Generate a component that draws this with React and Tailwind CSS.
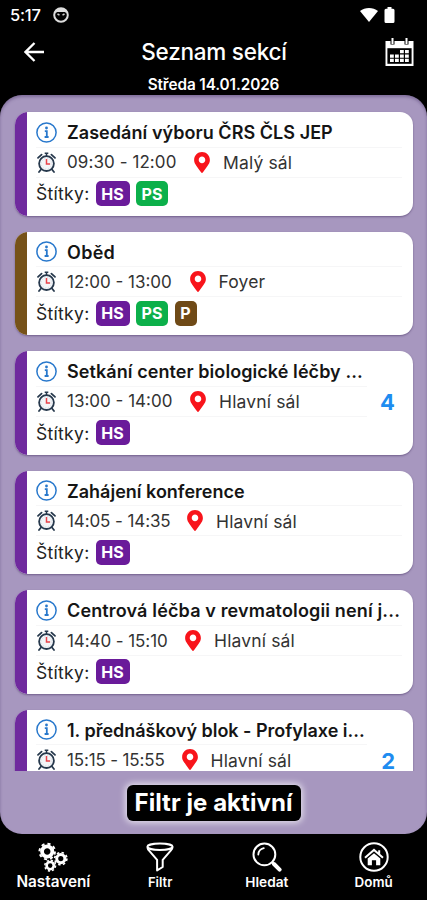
import React from "react";
import { FaMapMarkerAlt } from "react-icons/fa";

const TAGS = {
  HS: "w-[34px] bg-[#6a1b9a]",
  PS: "w-[32px] bg-[#0cb04a]",
  P: "w-[22px] bg-[#6f4a17]",
};

const sessions = [
  {
    title: "Zasedání výboru ČRS ČLS JEP",
    titleClass: "tracking-[0.05px]",
    time: "09:30 - 12:00",
    timeClass: "w-[110px] tracking-[0.08px]",
    place: "Malý sál",
    tags: ["HS", "PS"],
    stripe: "bg-[#6f2a9e]",
  },
  {
    title: "Oběd",
    titleClass: "tracking-[0.3px]",
    time: "12:00 - 13:00",
    timeClass: "w-[105.5px]",
    place: "Foyer",
    tags: ["HS", "PS", "P"],
    stripe: "bg-[#765219]",
  },
  {
    title: "Setkání center biologické léčby ...",
    titleClass: "tracking-[0.07px]",
    time: "13:00 - 14:00",
    timeClass: "w-[106px]",
    place: "Hlavní sál",
    tags: ["HS"],
    stripe: "bg-[#6f2a9e]",
    count: 4,
  },
  {
    title: "Zahájení konference",
    titleClass: "tracking-[0]",
    time: "14:05 - 14:35",
    timeClass: "w-[103px] tracking-[-0.1px]",
    place: "Hlavní sál",
    tags: ["HS"],
    stripe: "bg-[#6f2a9e]",
  },
  {
    title: "Centrová léčba v revmatologii není j...",
    titleClass: "tracking-[0.15px]",
    time: "14:40 - 15:10",
    timeClass: "w-[101px] tracking-[-0.08px]",
    place: "Hlavní sál",
    tags: ["HS"],
    stripe: "bg-[#6f2a9e]",
  },
  {
    title: "1. přednáškový blok - Profylaxe i...",
    titleClass: "tracking-[-0.02px]",
    time: "15:15 - 15:55",
    timeClass: "w-[97.5px] tracking-[-0.15px]",
    place: "Hlavní sál",
    tags: ["HS"],
    stripe: "bg-[#6f2a9e]",
    count: 2,
  },
];

const InfoIcon = () => (
  <svg className="h-[21px] w-[21px] shrink-0" viewBox="0 0 21 21" fill="none">
    <circle cx="10.5" cy="10.5" r="9.6" stroke="#2878cc" strokeWidth="1.5" />
    <circle cx="10.5" cy="6" r="1.4" fill="#2878cc" />
    <path d="M8.8 9.2h2v5.6M8.6 15h4" stroke="#2878cc" strokeWidth="1.8" />
  </svg>
);

const ClockIcon = () => (
  <svg className="h-[21px] w-[21px] shrink-0" viewBox="0 0 21 21" fill="none">
    <path d="M5 17.5 3 20M16 17.5l2 2.5" stroke="#26384c" strokeWidth="1.8" strokeLinecap="round" />
    <path d="M2 5.8 5.6 2.6M19 5.8l-3.6-3.2" stroke="#26384c" strokeWidth="1.8" strokeLinecap="round" />
    <path d="M8.7 1.2h3.6M10.5 1v3" stroke="#26384c" strokeWidth="1.5" />
    <circle cx="10.5" cy="11.6" r="7.4" fill="#f3f5f8" stroke="#26384c" strokeWidth="1.8" />
    <circle cx="10.5" cy="11.6" r="5.2" stroke="#ccd5df" strokeWidth="0.8" strokeDasharray="1 1.7" />
    <path d="M10.5 7v5h3.6" stroke="#e8434a" strokeWidth="1.5" />
  </svg>
);

const SessionCard = ({ session }) => (
  <div className="flex h-[103.6px] shrink-0 overflow-hidden rounded-[13px] bg-white shadow-[0_1px_2px_rgba(60,40,90,0.5)]">
    <div className={`w-[11.5px] shrink-0 ${session.stripe}`} />
    <div className="flex min-w-0 flex-1 pl-[9.5px] pr-[11px]">
      <div className="flex min-w-0 flex-1 flex-col pt-[5.5px] whitespace-nowrap">
        <div className="flex h-[30px] items-center border-b border-[#f6f6f7]">
          <InfoIcon />
          <span className={`ml-[10px] pt-[2px] text-[18px] leading-6 font-semibold text-[#151515] ${session.titleClass}`}>
            {session.title}
          </span>
        </div>
        <div className="flex h-[30px] items-center border-b border-[#f6f6f7] text-[17px] text-[#333]">
          <ClockIcon />
          <span className={`ml-[10px] pt-[2px] ${session.timeClass}`}>{session.time}</span>
          <FaMapMarkerAlt className="ml-[17px] h-[21px] w-4 shrink-0 text-[#f8141b]" />
          <span className="ml-[13px] pt-[2px] text-[17.5px] tracking-[0.15px]">{session.place}</span>
        </div>
        <div className="flex h-[32px] items-center gap-[6.5px] text-[17.5px] text-[#222]">
          <span className="w-[53px] pt-[2px] tracking-[0.3px]">Štítky:</span>
          {session.tags.map((tag) => (
            <span
              key={tag}
              className={`flex h-[25px] items-center justify-center rounded-[5px] text-base font-bold text-white ${TAGS[tag]}`}
            >
              {tag}
            </span>
          ))}
        </div>
      </div>
      {session.count && (
        <span className="w-[35px] pt-[39px] pr-[7px] text-right text-[22px] leading-6 font-bold text-[#1e8cf0]">
          {session.count}
        </span>
      )}
    </div>
  </div>
);

const Gear = ({ x, y, r }) => (
  <g transform={`translate(${x} ${y})`} stroke="white" fill="none">
    <circle r={r * 0.6} strokeWidth={r * 0.44} />
    <circle r={r * 0.9} strokeWidth={r * 0.24} strokeDasharray={`${r * 0.36} ${r * 0.3469}`} />
  </g>
);

const SettingsIcon = () => (
  <svg className="h-[30px] w-[30px]" viewBox="0 0 30 30">
    <Gear x={9.2} y={9.5} r={8.6} />
    <Gear x={22.8} y={16.6} r={6.8} />
    <Gear x={12.2} y={23.6} r={6} />
  </svg>
);

const FilterIcon = () => (
  <svg className="h-[30px] w-[30px]" viewBox="0 0 30 30" fill="none" stroke="white" strokeWidth="2">
    <ellipse cx="15" cy="4.8" rx="12.6" ry="3.2" />
    <path d="M2.4 5.2c.3 1.6.8 2.4 1.7 3.4l8 9.2v10.6l5.6-3.4v-7.2l8-9.2c.9-1 1.5-1.8 1.9-3.4" strokeLinejoin="round" />
  </svg>
);

const SearchIcon = () => (
  <svg className="h-[30px] w-[30px]" viewBox="0 0 30 30" fill="none" stroke="white">
    <circle cx="12.4" cy="12.4" r="10.9" strokeWidth="2" />
    <path d="M6.3 12.5c.2-3.2 2.2-5.6 5.5-6.3" strokeWidth="1.8" strokeLinecap="round" />
    <path d="m19.8 19.8 2 2" strokeWidth="2" />
    <path d="m22 22 5.6 5.6" strokeWidth="4" strokeLinecap="round" />
  </svg>
);

const HomeIcon = () => (
  <svg className="h-[30px] w-[30px]" viewBox="0 0 30 30" fill="none">
    <circle cx="15" cy="15" r="13.7" stroke="white" strokeWidth="2" />
    <path d="m6 15.7 9-7.8 9 7.8M20.2 8.2v4" stroke="white" strokeWidth="2" />
    <path d="m15 11.3 6.3 5.3v6.7h-4.2v-5h-4.2v5H8.7v-6.7z" fill="white" />
  </svg>
);

const CalendarIcon = () => (
  <svg className="h-[28px] w-[29px]" viewBox="0 0 29 28" fill="none">
    <path d="M.5 3h28v25H.5z" fill="white" />
    <path d="M2.4 10.2h24.2v15.6H2.4z" fill="black" />
    <path d="M7.5 0v6.5M21.5 0v6.5" stroke="black" strokeWidth="4" />
    <path d="M7.5 0v6M21.5 0v6" stroke="white" strokeWidth="2" />
    <path
      d="M15 12h3.8v3.3H15zM20 12h3.8v3.3H20zM5 16.4h3.8v3.3H5zM10 16.4h3.8v3.3H10zM15 16.4h3.8v3.3H15zM20 16.4h3.8v3.3H20zM5 20.8h3.8v3.3H5zM10 20.8h3.8v3.3H10zM15 20.8h3.8v3.3H15zM20 20.8h3.8v3.3H20z"
      fill="white"
    />
  </svg>
);

const StatusBar = () => (
  <div className="flex h-[30px] items-center pl-[10px] pr-[32px]">
    <span className="pt-[1px] text-[16.5px] font-medium tracking-[-0.2px]">5:17</span>
    <svg className="ml-[12px] h-4 w-4" viewBox="0 0 16 16">
      <circle cx="8" cy="8" r="6.8" fill="none" stroke="#ddd" strokeWidth="2" />
      <path d="M2 6.5C3 2.5 5.2 1 8 1s5 1.5 6 5.5L11.8 5H4.2z" fill="#ddd" />
      <path d="m4.5 7 2 1.2M11.5 7l-2 1.2" stroke="#ccc" strokeWidth="1.5" />
    </svg>
    <svg className="ml-auto h-4 w-[18px]" viewBox="0 0 18 16" fill="white">
      <path d="M0 4c5-4 13-4 18 0L9 15z" />
    </svg>
    <svg className="ml-[6px] h-4 w-[11px]" viewBox="0 0 11 16" fill="white">
      <path d="M3.5 0h4v1.7H9a1.5 1.5 0 0 1 1.5 1.5v11.3A1.5 1.5 0 0 1 9 16H2a1.5 1.5 0 0 1-1.5-1.5V3.2A1.5 1.5 0 0 1 2 1.7h1.5z" />
    </svg>
  </div>
);

const NavItem = ({ icon, label, labelClass }) => (
  <div className="flex w-[106.75px] flex-col items-center">
    {icon}
    <span className={`h-[20px] leading-[20px] font-semibold ${labelClass}`}>{label}</span>
  </div>
);

const App = () => (
  <div className="flex h-[900px] w-[427px] flex-col overflow-hidden bg-black font-['Inter','Noto_Sans',sans-serif] text-white">
    <StatusBar />

    <div className="flex h-[44px] items-center justify-between pl-[24px] pr-[13px]">
      <svg className="h-5 w-5" viewBox="0 0 20 20" fill="none" stroke="white" strokeWidth="2.3">
        <path d="M20 10H2M10.5 1 1.5 10l9 9" />
      </svg>
      <h1 className="mr-[1px] text-[22.5px] font-medium tracking-[-0.25px]">Seznam sekcí</h1>
      <CalendarIcon />
    </div>
    <div className="h-[21px] text-center text-[15.3px] leading-[22px] font-semibold tracking-[-0.1px]">Středa 14.01.2026</div>

    <div className="flex h-[739px] flex-col rounded-[22px] bg-[#a797bf] shadow-[inset_0_2px_3px_rgba(80,60,110,0.45)]">
      <div className="flex h-[676px] flex-col gap-4 overflow-hidden pt-[17px] pl-[15px] pr-[14px]">
        {sessions.map((session) => (
          <SessionCard key={session.title} session={session} />
        ))}
      </div>
      <div className="mt-[14px] flex h-[36px] w-[174px] items-center justify-center self-center rounded-[6px] bg-black text-[24px] font-bold whitespace-nowrap tracking-[0.05px] shadow-[0_0_6px_2px_rgba(255,255,255,0.65)]">
        Filtr je aktivní
      </div>
    </div>

    <div className="flex pt-[8px]">
      <NavItem icon={<SettingsIcon />} label="Nastavení" labelClass="text-[15.3px]" />
      <NavItem icon={<FilterIcon />} label="Filtr" labelClass="text-[13px]" />
      <NavItem icon={<SearchIcon />} label="Hledat" labelClass="text-[13.7px]" />
      <NavItem icon={<HomeIcon />} label="Domů" labelClass="text-[13.4px]" />
    </div>
  </div>
);

export default App;
